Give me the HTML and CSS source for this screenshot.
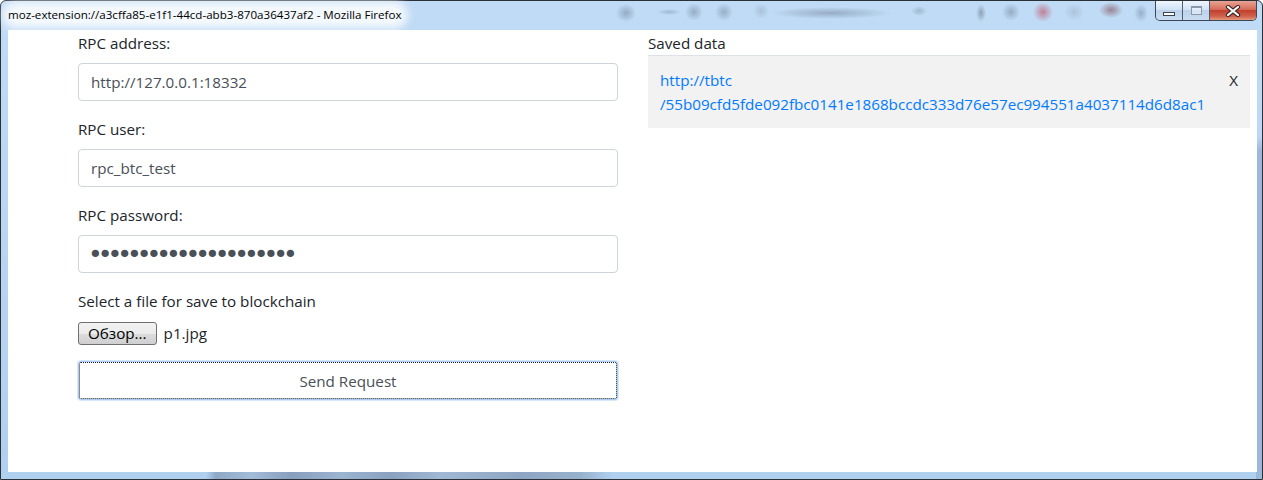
FILE: index.html
```html
<!DOCTYPE html>
<html lang="en">

<head>
    <meta charset="UTF-8">
    <meta name="viewport" content="width=device-width, initial-scale=1.0">
    <title>moz-extension://a3cffa85-e1f1-44cd-abb3-870a36437af2 - Mozilla Firefox</title>
    <link rel="stylesheet" href="styles.css">
</head>

<body>
    <div class="window">
        <div class="titlebar">
            <span class="title">moz-extension://a3cffa85-e1f1-44cd-abb3-870a36437af2 - Mozilla Firefox</span>
            <div class="controls">
                <span class="ctl ctl-min"><i></i></span>
                <span class="ctl ctl-max"><i></i></span>
                <span class="ctl ctl-close">
                    <svg width="16" height="12" viewBox="0 0 16 12">
                        <path d="M3 2 L13 10 M13 2 L3 10" stroke="#3b2a2a" stroke-width="4.2" stroke-linecap="round"/>
                        <path d="M3 2 L13 10 M13 2 L3 10" stroke="#ffffff" stroke-width="2.2" stroke-linecap="round"/>
                    </svg>
                </span>
            </div>
        </div>

        <div class="client">
            <form class="settings">
                <div class="form-group">
                    <label for="address">RPC address:</label>
                    <input type="text" id="address" class="form-control" value="http://127.0.0.1:18332">
                </div>
                <div class="form-group">
                    <label for="user">RPC user:</label>
                    <input type="text" id="user" class="form-control" value="rpc_btc_test">
                </div>
                <div class="form-group">
                    <label for="password">RPC password:</label>
                    <input type="password" id="password" class="form-control secret" value="xxxxxxxxxxxxxxxxxxxxx">
                </div>
                <div class="form-group">
                    <label>Select a file for save to blockchain</label>
                    <div class="file-row">
                        <button type="button" class="browse">Обзор...</button>
                        <span class="file-name">p1.jpg</span>
                    </div>
                </div>
                <button type="button" class="send">Send Request</button>
            </form>

            <div class="saved">
                <div class="saved-title">Saved data</div>
                <table class="saved-table">
                    <tr>
                        <td><a href="#">http://tbtc<br>/55b09cfd5fde092fbc0141e1868bccdc333d76e57ec994551a4037114d6d8ac1</a></td>
                        <td class="del">X</td>
                    </tr>
                </table>
            </div>
        </div>
    </div>
</body>

</html>
```

FILE: styles.css
```css
body {
    margin: 0;
    font-family: "Open Sans", "Noto Sans", sans-serif;
}

a {
    color: #007bff;
    text-decoration: none;
}

/* window frame (win7 aero) */
.window {
    box-sizing: border-box;
    width: 1263px;
    height: 480px;
    display: flex;
    flex-direction: column;
    padding: 0 5px 7px 7px;
    border: 1px solid #2b2f36;
    border-radius: 6px 6px 0 0;
    background:
        linear-gradient(to right, transparent 205px, #8ea8c6 215px, #a3bcd8 250px, #889fbe 290px, #9bb4d0 340px, #8aa2c0 390px, #a0b8d3 440px, #8ea6c3 520px, #98b1cd 580px, transparent 612px) left bottom / 100% 8px no-repeat,
        linear-gradient(to bottom, transparent 135px, #9cb8d8 150px) right top / 6px 100% no-repeat,
        radial-gradient(10px 9px at 625px 12px, rgba(110, 130, 155, .55), transparent),
        radial-gradient(12px 3px at 668px 11px, rgba(110, 130, 155, .4), transparent),
        radial-gradient(9px 9px at 693px 11px, rgba(110, 130, 155, .5), transparent),
        radial-gradient(9px 9px at 723px 11px, rgba(110, 130, 155, .5), transparent),
        radial-gradient(8px 8px at 760px 10px, rgba(130, 150, 170, .35), transparent),
        radial-gradient(60px 6px at 830px 12px, rgba(100, 115, 135, .45), transparent),
        radial-gradient(8px 5px at 918px 10px, rgba(100, 115, 135, .35), transparent),
        radial-gradient(5px 9px at 980px 12px, rgba(90, 105, 125, .5), transparent),
        radial-gradient(9px 9px at 1010px 11px, rgba(100, 115, 135, .45), transparent),
        radial-gradient(10px 10px at 1042px 11px, rgba(190, 70, 90, .6), transparent),
        radial-gradient(10px 9px at 1073px 11px, rgba(140, 155, 175, .35), transparent),
        radial-gradient(12px 8px at 1110px 9px, rgba(120, 60, 70, .55), transparent),
        radial-gradient(7px 9px at 1140px 12px, rgba(100, 120, 150, .45), transparent),
        linear-gradient(#c0dbf5, #b0d0f0);
}

.titlebar {
    flex: none;
    height: 29px;
    display: flex;
    justify-content: space-between;
    align-items: flex-start;
}

.title {
    margin-top: 6px;
    font-size: 11.6px;
    line-height: 16px;
    color: #000000;
    background: rgba(255, 255, 255, .8);
    box-shadow: 0 0 8px 6px rgba(255, 255, 255, .8);
    border-radius: 8px;
}

.controls {
    display: flex;
    height: 19px;
    border: 1px solid #3c4656;
    border-top: 0;
    border-radius: 0 0 5px 5px;
    overflow: hidden;
}

.ctl {
    display: flex;
    align-items: center;
    justify-content: center;
    width: 26px;
    background: linear-gradient(rgba(255, 255, 255, .75), rgba(220, 232, 246, .6) 45%, rgba(185, 205, 228, .6) 50%, rgba(205, 222, 240, .7));
}

.ctl-min {
    border-right: 1px solid #4f5d72;
}

.ctl-min i {
    width: 10px;
    height: 2px;
    margin-top: 6px;
    background: #ffffff;
    border: 1px solid #3a4250;
}

.ctl-max {
    border-right: 1px solid #4f5d72;
}

.ctl-max i {
    width: 9px;
    height: 6px;
    border: 1px solid #8d97a5;
    border-top-width: 2px;
    background: rgba(255, 255, 255, .4);
}

.ctl-close {
    width: 46px;
    background: linear-gradient(#e8a493, #d66b58 45%, #c2412e 50%, #d0604a 80%, #e39a7c);
}

/* page */
.client {
    flex: 1;
    display: flex;
    align-items: flex-start;
    gap: 30px;
    padding: 1px 8px 0 70px;
    background: #ffffff;
    color: #212529;
    font-size: 15.2px;
    line-height: 24px;
}

.settings {
    flex: none;
    width: 540px;
    margin: 0;
}

.form-group {
    margin-bottom: 16px;
}

.form-group label {
    display: block;
    margin-bottom: 8px;
}

.form-control {
    display: block;
    box-sizing: border-box;
    width: 100%;
    height: 38px;
    padding: 6px 12px;
    font: inherit;
    color: #495057;
    background: #ffffff;
    border: 1px solid #ced4da;
    border-radius: 4px;
}

.form-control.secret {
    padding: 1px 9px 0;
    font-family: "DejaVu Sans", sans-serif;
    font-size: 25px;
    line-height: 36px;
    letter-spacing: -5px;
}

.file-row {
    display: flex;
    align-items: center;
    gap: 7px;
    height: 24px;
}

.browse {
    height: 23px;
    padding: 0 9px;
    font: inherit;
    line-height: 19px;
    color: #000000;
    border: 1px solid #707070;
    border-radius: 3px;
    background: linear-gradient(#f2f2f2, #ebebeb 50%, #dddddd 50%, #cfcfcf);
}

.send {
    display: block;
    box-sizing: border-box;
    width: 100%;
    height: 39px;
    font: inherit;
    color: #495057;
    background: #ffffff;
    border: 1px solid #a7cbf3;
    border-radius: 3px;
    box-shadow: 0 0 0 1px #d8e8fb;
    outline: 1px dotted #1a1a1a;
    outline-offset: -2px;
}

.saved {
    flex: 1;
}

.saved-title {
    line-height: 24px;
}

.saved-table {
    width: 100%;
    border-collapse: collapse;
}

.saved-table td {
    padding: 12px;
    vertical-align: top;
    background: #f2f2f2;
    border-top: 1px solid #dee2e6;
}

.saved-table .del {
    width: 1%;
}
```
